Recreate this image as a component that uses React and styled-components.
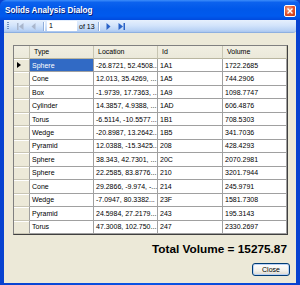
import React from "react";
import styled, { createGlobalStyle } from "styled-components";

const GlobalStyle = createGlobalStyle`
  html, body {
    margin: 0;
    padding: 0;
    background: #ffffff;
  }
  body {
    font-family: "Liberation Sans", Arial, sans-serif;
  }
`;

const Window = styled.div`
  width: 300px;
  height: 285px;
  display: flex;
  flex-direction: column;
  background: linear-gradient(90deg, #0842d0 0%, #0a55e6 50%, #0842d0 100%);
  box-sizing: border-box;
`;

const TitleBar = styled.div`
  height: 20px;
  flex: none;
  display: flex;
  align-items: center;
  justify-content: space-between;
  padding: 0 4px 0 5px;
  background: linear-gradient(
    180deg,
    #3d8dfa 0%,
    #0c62ee 12%,
    #0058ea 45%,
    #005aee 80%,
    #004ade 100%
  );
  border-radius: 6px 6px 0 0;
`;

const Title = styled.span`
  color: #ffffff;
  font-weight: bold;
  font-size: 8.2px;
  text-shadow: 1px 1px 0 #0a1f7a;
`;

const CloseBox = styled.div`
  width: 12px;
  height: 12px;
  margin-top: 1px;
  border: 1px solid #ffffff;
  border-radius: 2px;
  background: radial-gradient(circle at 35% 30%, #f4a080 0%, #e2502a 55%, #c23a16 100%);
  display: flex;
  align-items: center;
  justify-content: center;
  box-sizing: border-box;
`;

const Client = styled.div`
  flex: 1;
  margin: 0 4px 3px 4px;
  background: #ece9d8;
  display: flex;
  flex-direction: column;
`;

const ToolStrip = styled.div`
  height: 12px;
  display: flex;
  align-items: center;
  padding-left: 2px;
  background: linear-gradient(180deg, #e6f0fd 0%, #d3e4fb 45%, #bdd5f6 80%, #a9c6ef 100%);
  border-bottom: 1px solid #8eb0e0;
  border-radius: 0 0 3px 0;
`;

const Grip = styled.div`
  width: 2px;
  height: 8px;
  margin: 0 5px 0 1px;
  background: repeating-linear-gradient(180deg, #6f8fbf 0 1px, transparent 1px 2px);
`;

const ToolButton = styled.div`
  width: 13px;
  height: 11px;
  display: flex;
  align-items: center;
  justify-content: center;
`;

const Separator = styled.div`
  width: 1px;
  height: 9px;
  margin: 0 3px;
  background: #90aedb;
  box-shadow: 1px 0 0 #ffffff;
`;

const PageBox = styled.div`
  width: 30px;
  height: 10px;
  background: #ffffff;
  font-size: 7px;
  line-height: 10px;
  padding-left: 2px;
  box-sizing: border-box;
  color: #000;
`;

const PageCount = styled.span`
  font-size: 7px;
  margin-left: 2px;
  color: #000;
`;

const Body = styled.div`
  flex: 1;
  display: flex;
  flex-direction: column;
  padding: 12px 8px 7px 9px;
`;

const Grid = styled.div`
  width: 275px;
  height: 190px;
  box-sizing: border-box;
  border: 1px solid #808080;
  border-right-color: #404040;
  border-bottom-color: #404040;
  box-shadow: inset 1px 1px 0 #404040;
  background: #ffffff;
  display: grid;
  grid-template-columns: 16px 64px 64px 65px 64px;
  grid-template-rows: 13px repeat(13, 1fr);
  overflow: hidden;
`;

const HeaderCell = styled.div`
  background: linear-gradient(180deg, #f1efe2 0%, #ebe9da 100%);
  border-right: 1px solid #c7c5b2;
  border-bottom: 1px solid #b9b6a0;
  font-size: 7px;
  line-height: 12px;
  padding-left: ${(p) => (p.$pad ? "4px" : "0")};
  color: #000;
  white-space: nowrap;
  overflow: hidden;
`;

const RowHead = styled.div`
  background: #ece9d8;
  border-right: 1px solid #a0a0a0;
  border-bottom: 1px solid #c8c5b4;
  box-shadow: inset 0 1px 0 #ffffff;
  display: flex;
  align-items: center;
  padding-left: 3px;
`;

const Cell = styled.div`
  background: ${(p) => (p.$selected ? "#316ac5" : "#ffffff")};
  color: ${(p) => (p.$selected ? "#ffffff" : "#000000")};
  border-right: 1px solid #a0a0a0;
  border-bottom: 1px solid #a0a0a0;
  font-size: 7px;
  display: flex;
  align-items: center;
  padding-left: 2px;
  white-space: nowrap;
  overflow: hidden;
`;

const Footer = styled.div`
  display: flex;
  flex-direction: column;
  align-items: flex-end;
  padding-right: 1px;
`;

const Total = styled.div`
  margin-top: 7px;
  font-weight: bold;
  font-size: 11.8px;
  line-height: 14px;
  color: #000;
`;

const Button = styled.div`
  margin-top: 7px;
  margin-right: -3px;
  width: 38px;
  height: 13px;
  box-sizing: border-box;
  border: 1px solid #003c74;
  border-radius: 3px;
  background: linear-gradient(180deg, #ffffff 0%, #f2f1ec 60%, #dcd8cd 100%);
  box-shadow: inset 0 0 0 1px #b9d1f6;
  font-size: 7px;
  line-height: 11px;
  text-align: center;
  color: #000;
`;

const rows = [
  ["Sphere", "-26.8721, 52.4508...", "1A1", "1722.2685"],
  ["Cone", "12.013, 35.4269, ...", "1A5", "744.2906"],
  ["Box", "-1.9739, 17.7363, ...", "1A9", "1098.7747"],
  ["Cylinder", "14.3857, 4.9388, ...", "1AD", "606.4876"],
  ["Torus", "-6.5114, -10.5577...", "1B1", "708.5303"],
  ["Wedge", "-20.8987, 13.2642...", "1B5", "341.7036"],
  ["Pyramid", "12.0388, -15.3425...", "208", "428.4293"],
  ["Sphere", "38.343, 42.7301, ...", "20C", "2070.2981"],
  ["Sphere", "22.2585, 83.8776...", "210", "3201.7944"],
  ["Cone", "29.2866, -9.974, -...", "214", "245.9791"],
  ["Wedge", "-7.0947, 80.3382...", "23F", "1581.7308"],
  ["Pyramid", "24.5984, 27.2179...", "243", "195.3143"],
  ["Torus", "47.3008, 102.750...", "247", "2330.2697"],
];

const FirstIcon = ({ color }) => (
  <svg width="9" height="9" viewBox="0 0 9 9">
    <rect x="1" y="1" width="1.5" height="7" fill={color} />
    <path d="M7.5 1 L3 4.5 L7.5 8 Z" fill={color} />
  </svg>
);

const PrevIcon = ({ color }) => (
  <svg width="9" height="9" viewBox="0 0 9 9">
    <path d="M6.5 1 L2.5 4.5 L6.5 8 Z" fill={color} />
  </svg>
);

const NextIcon = ({ color }) => (
  <svg width="9" height="9" viewBox="0 0 9 9">
    <path d="M2.5 1 L6.5 4.5 L2.5 8 Z" fill={color} />
  </svg>
);

const LastIcon = ({ color }) => (
  <svg width="9" height="9" viewBox="0 0 9 9">
    <path d="M1.5 1 L6 4.5 L1.5 8 Z" fill={color} />
    <rect x="6.5" y="1" width="1.5" height="7" fill={color} />
  </svg>
);

export default function App() {
  const disabled = "#a9b6cc";
  const active = "#2a62c6";
  return (
    <>
      <GlobalStyle />
      <Window>
        <TitleBar>
          <Title>Solids Analysis Dialog</Title>
          <CloseBox>
            <svg width="8" height="8" viewBox="0 0 8 8">
              <path
                d="M1.5 1.5 L6.5 6.5 M6.5 1.5 L1.5 6.5"
                stroke="#ffffff"
                strokeWidth="1.4"
              />
            </svg>
          </CloseBox>
        </TitleBar>
        <Client>
          <ToolStrip>
            <Grip />
            <ToolButton>
              <FirstIcon color={disabled} />
            </ToolButton>
            <ToolButton>
              <PrevIcon color={disabled} />
            </ToolButton>
            <Separator />
            <PageBox>1</PageBox>
            <PageCount>of 13</PageCount>
            <Separator />
            <ToolButton>
              <NextIcon color={active} />
            </ToolButton>
            <ToolButton>
              <LastIcon color={active} />
            </ToolButton>
          </ToolStrip>
          <Body>
            <Grid>
              <HeaderCell />
              <HeaderCell $pad>Type</HeaderCell>
              <HeaderCell $pad>Location</HeaderCell>
              <HeaderCell $pad>Id</HeaderCell>
              <HeaderCell $pad>Volume</HeaderCell>
              {rows.map((r, i) => (
                <React.Fragment key={i}>
                  <RowHead>
                    {i === 0 && (
                      <svg width="4" height="6" viewBox="0 0 4 6">
                        <path d="M0 0 L4 3 L0 6 Z" fill="#000" />
                      </svg>
                    )}
                  </RowHead>
                  <Cell $selected={i === 0}>{r[0]}</Cell>
                  <Cell>{r[1]}</Cell>
                  <Cell>{r[2]}</Cell>
                  <Cell>{r[3]}</Cell>
                </React.Fragment>
              ))}
            </Grid>
            <Footer>
              <Total>Total Volume = 15275.87</Total>
              <Button>Close</Button>
            </Footer>
          </Body>
        </Client>
      </Window>
    </>
  );
}
